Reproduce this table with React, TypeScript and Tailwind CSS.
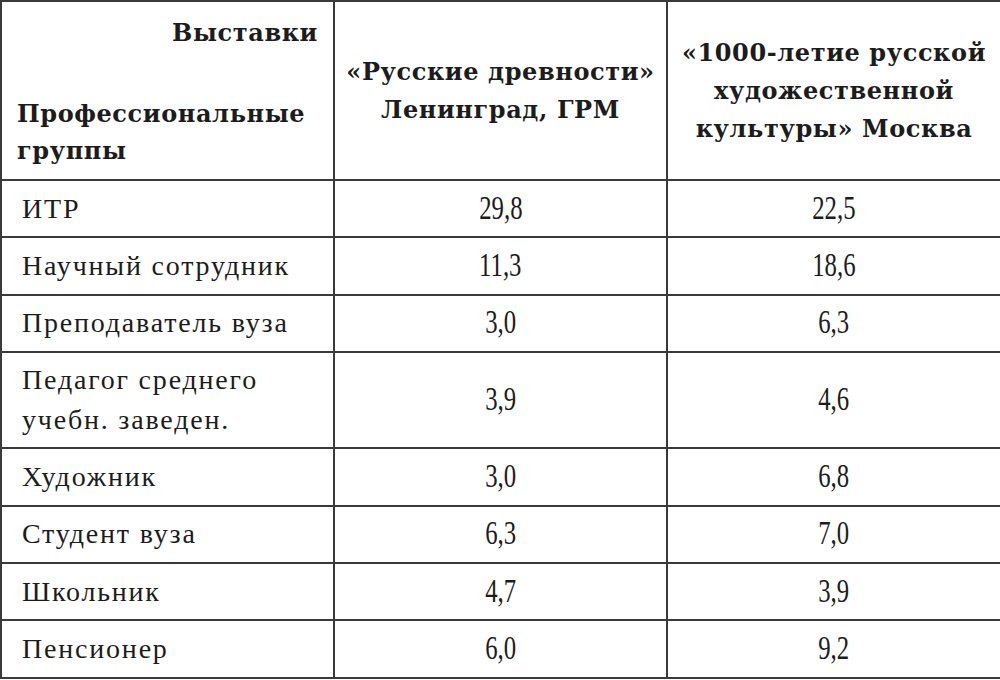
const rows: { name: string[]; a: string; b: string; tall?: boolean }[] = [
  { name: ["ИТР"], a: "29,8", b: "22,5" },
  { name: ["Научный сотрудник"], a: "11,3", b: "18,6" },
  { name: ["Преподаватель вуза"], a: "3,0", b: "6,3" },
  { name: ["Педагог среднего", "учебн. заведен."], a: "3,9", b: "4,6", tall: true },
  { name: ["Художник"], a: "3,0", b: "6,8" },
  { name: ["Студент вуза"], a: "6,3", b: "7,0" },
  { name: ["Школьник"], a: "4,7", b: "3,9" },
  { name: ["Пенсионер"], a: "6,0", b: "9,2" },
];

function Num({ v }: { v: string }) {
  return (
    <span className="inline-block scale-x-75 font-['Liberation_Serif',serif] text-[33px] leading-none">
      {v}
    </span>
  );
}

export default function App() {
  return (
    <div className="w-[1000px] h-[680px] bg-white text-[#1c1c1c] font-['DejaVu_Serif',serif]">
      <table className="w-[1000px] border-collapse border-2 border-[#3a3a3a] table-fixed">
        <colgroup>
          <col className="w-[333px]" />
          <col className="w-[333px]" />
          <col className="w-[334px]" />
        </colgroup>
        <thead>
          <tr className="h-[179px]">
            <th className="border-2 border-[#3a3a3a] p-0 align-top font-bold">
              <div className="flex h-[177px] flex-col justify-between px-[15px] pt-[12px] pb-[10px] text-[24px] leading-[37px] tracking-[0.6px]">
                <div className="text-right">Выставки</div>
                <div className="text-left">
                  <div>Профессиональные</div>
                  <div>группы</div>
                </div>
              </div>
            </th>
            <th className="border-2 border-[#3a3a3a] p-0 align-middle text-center text-[24px] leading-[38px] tracking-[0.6px] font-bold">
              <div>«Русские древности»</div>
              <div>Ленинград, ГРМ</div>
            </th>
            <th className="border-2 border-[#3a3a3a] p-0 align-middle text-center text-[24px] leading-[38px] tracking-[0.6px] font-bold">
              <div>«1000-летие русской</div>
              <div>художественной</div>
              <div>культуры» Москва</div>
            </th>
          </tr>
        </thead>
        <tbody>
          {rows.map((r) => (
            <tr key={r.name.join(" ")} className={r.tall ? "h-[96px]" : "h-[57.4px]"}>
              <td className="border-2 border-[#3a3a3a] px-[20px] align-middle font-['Liberation_Serif',serif] text-[28px] leading-[40px] tracking-[1.8px]">
                {r.name.map((n) => (
                  <div key={n}>{n}</div>
                ))}
              </td>
              <td className="border-2 border-[#3a3a3a] text-center align-middle">
                <Num v={r.a} />
              </td>
              <td className="border-2 border-[#3a3a3a] text-center align-middle">
                <Num v={r.b} />
              </td>
            </tr>
          ))}
        </tbody>
      </table>
    </div>
  );
}
